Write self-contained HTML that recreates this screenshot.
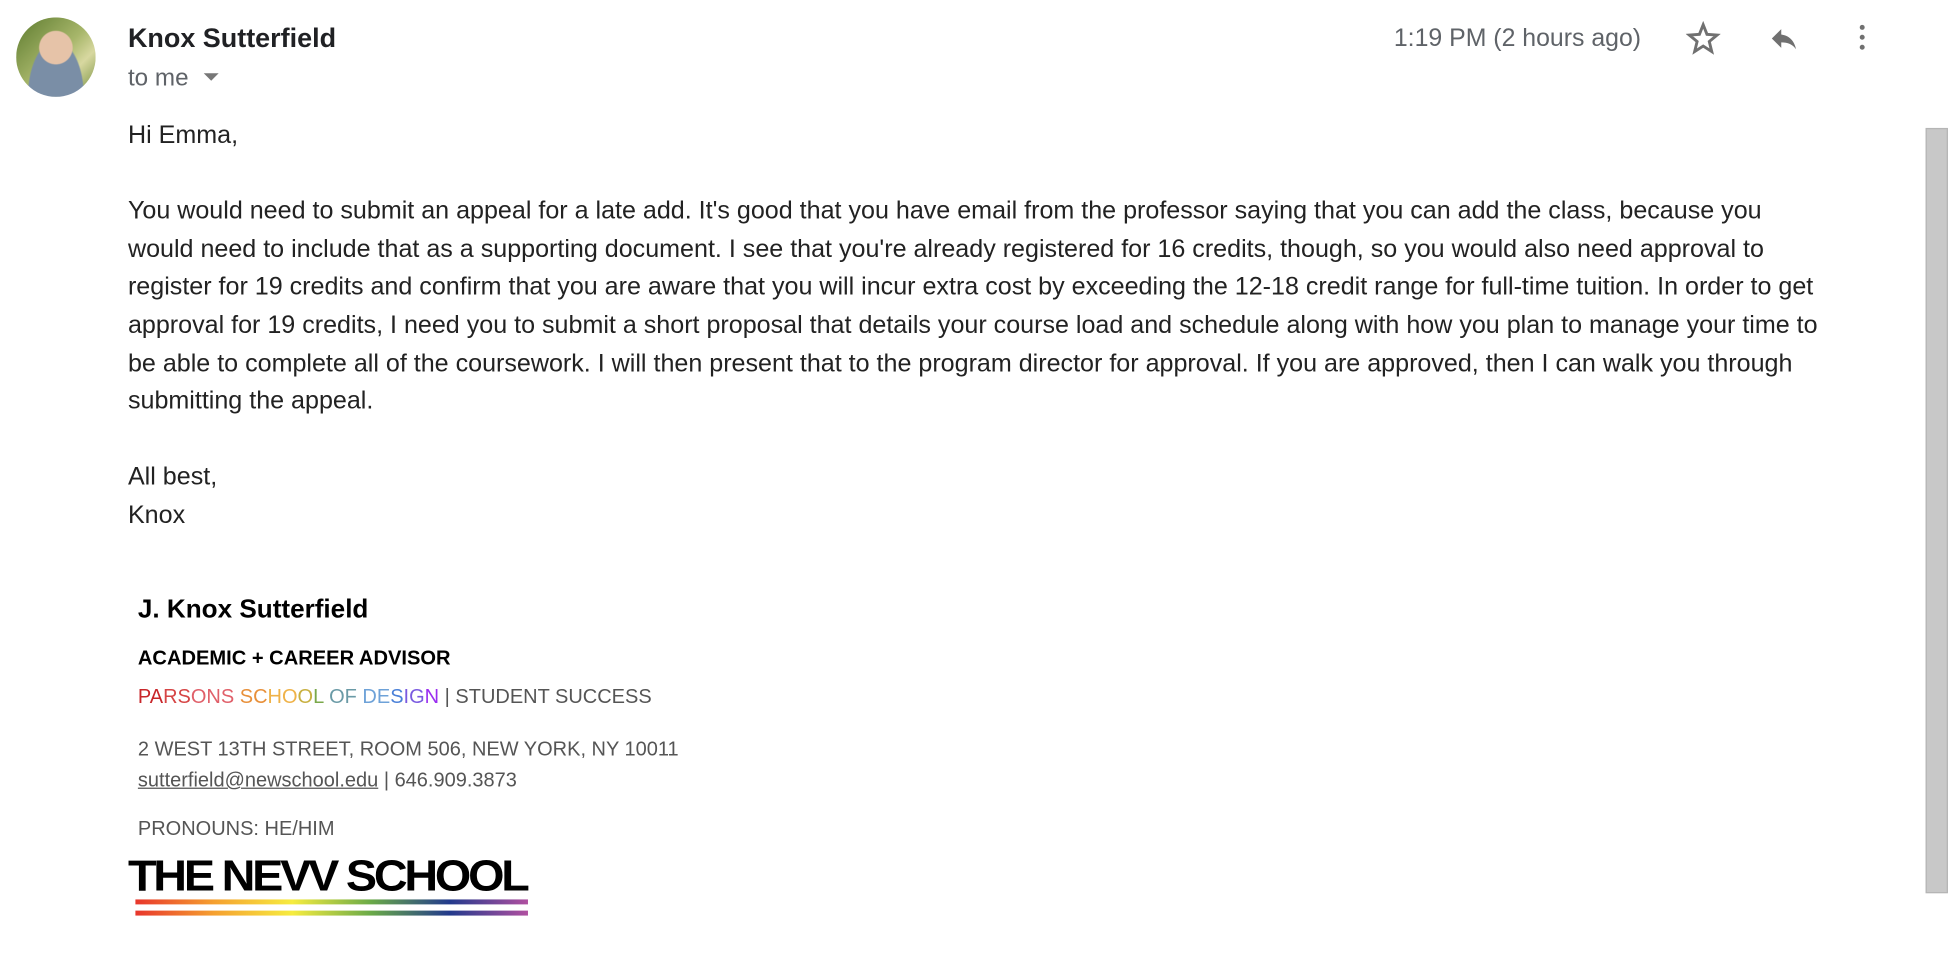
<!DOCTYPE html>
<html><head><meta charset="utf-8"><style>
html,body{margin:0;padding:0;background:#fff;width:1948px;height:952px;overflow:hidden}
#w{position:absolute;left:0;top:0;width:1568px;height:767px;transform:scale(1.2423);transform-origin:0 0;font-family:"Liberation Sans",Arial,sans-serif;color:#222}
.a{position:absolute;white-space:nowrap}
.body{position:absolute;left:103px;top:94px;font-size:20.2px;line-height:30.6px;white-space:nowrap;color:#222}
.sig{font-size:16.1px;color:#555}
</style></head><body><div id="w">
<div class="a" style="left:13px;top:14px;width:64px;height:64px;border-radius:50%;background:radial-gradient(circle at 50% 38%,#e6c3a8 0 13px,transparent 14px),radial-gradient(ellipse at 50% 100%,#7a8ea6 0 22px,transparent 23px),linear-gradient(135deg,#5c7a2e,#a7b66a 50%,#d8d8a0 70%,#6e8a38);overflow:hidden"></div>
<div class="a" style="left:103px;top:18px;font-size:21.7px;font-weight:bold;color:#202124">Knox Sutterfield</div>
<div class="a" style="left:103px;top:52px;font-size:19.5px;color:#5f6368">to me</div>
<div class="a" style="left:164px;top:59px;width:0;height:0;border-left:6px solid transparent;border-right:6px solid transparent;border-top:6px solid #777"></div>
<div class="a" style="left:1122px;top:20px;font-size:20px;color:#5f6368">1:19 PM (2 hours ago)</div>
<svg class="a" style="left:1357px;top:17px" width="28" height="28" viewBox="0 0 24 24"><path d="M12 2.5l2.6 6.6 7 .5-5.4 4.5 1.7 6.9L12 17.2 6.1 21l1.7-6.9L2.4 9.6l7-.5z" fill="none" stroke="#707070" stroke-width="2" stroke-linejoin="miter"/></svg>
<svg class="a" style="left:1421px;top:18px" width="30" height="26" viewBox="0 0 24 24"><path d="M10 9V5l-7 7 7 7v-4.1c5 0 8.5 1.6 11 5.1-1-5-4-10-11-11z" fill="#707070"/></svg>
<div class="a" style="left:1497px;top:20px;width:4px;height:4px;border-radius:50%;background:#707070;box-shadow:0 8px 0 #707070,0 16px 0 #707070"></div>
<div class="a" style="left:1550px;top:103px;width:16px;height:614px;background:#c8c8c8;border:1px solid #b5b5b5"></div>
<div class="body">Hi Emma,<br><br>You would need to submit an appeal for a late add. It's good that you have email from the professor saying that you can add the class, because you<br>would need to include that as a supporting document. I see that you're already registered for 16 credits, though, so you would also need approval to<br>register for 19 credits and confirm that you are aware that you will incur extra cost by exceeding the 12-18 credit range for full-time tuition. In order to get<br>approval for 19 credits, I need you to submit a short proposal that details your course load and schedule along with how you plan to manage your time to<br>be able to complete all of the coursework. I will then present that to the program director for approval. If you are approved, then I can walk you through<br>submitting the appeal.<br><br>All best,<br>Knox</div>
<div class="a" style="left:111px;top:479px;font-size:21px;font-weight:bold;color:#000">J. Knox Sutterfield</div>
<div class="a" style="left:111px;top:521px;font-size:16.2px;font-weight:bold;color:#000">ACADEMIC + CAREER ADVISOR</div>
<div class="a sig" style="left:111px;top:552px"><span style="color:#c8262a">PA</span><span style="color:#d64545">RS</span><span style="color:#e0606a">ONS</span> <span style="color:#e8903a">SC</span><span style="color:#efb248">HO</span><span style="color:#c8b040">O</span><span style="color:#7aa84a">L</span> <span style="color:#6a9aa6">OF</span> <span style="color:#6ea2d8">DE</span><span style="color:#4a80d8">S</span><span style="color:#7a5ae0">IG</span><span style="color:#9a2ef0">N</span> | STUDENT SUCCESS</div>
<div class="a sig" style="left:111px;top:594px">2 WEST 13TH STREET, ROOM 506, NEW YORK, NY 10011</div>
<div class="a sig" style="left:111px;top:619px"><span style="text-decoration:underline">sutterfield@newschool.edu</span> | 646.909.3873</div>
<div class="a sig" style="left:111px;top:658px">PRONOUNS: HE/HIM</div>
<div class="a" style="left:103px;top:686px;font-size:35px;font-weight:900;color:#000;letter-spacing:-2.4px;transform:scaleX(1.075);transform-origin:0 0;font-family:'Liberation Sans',Arial,sans-serif">THE NEVV SCHOOL</div>
<div class="a" style="left:109px;top:724px;width:316px;height:4px;background:linear-gradient(90deg,#e8362c,#f5a030 20%,#f6ec40 40%,#6aaa48 60%,#223a8c 80%,#b050a0)"></div>
<div class="a" style="left:109px;top:733px;width:316px;height:4px;background:linear-gradient(90deg,#e8362c,#f5a030 20%,#f6ec40 40%,#6aaa48 60%,#223a8c 80%,#b050a0)"></div>
</div></body></html>
